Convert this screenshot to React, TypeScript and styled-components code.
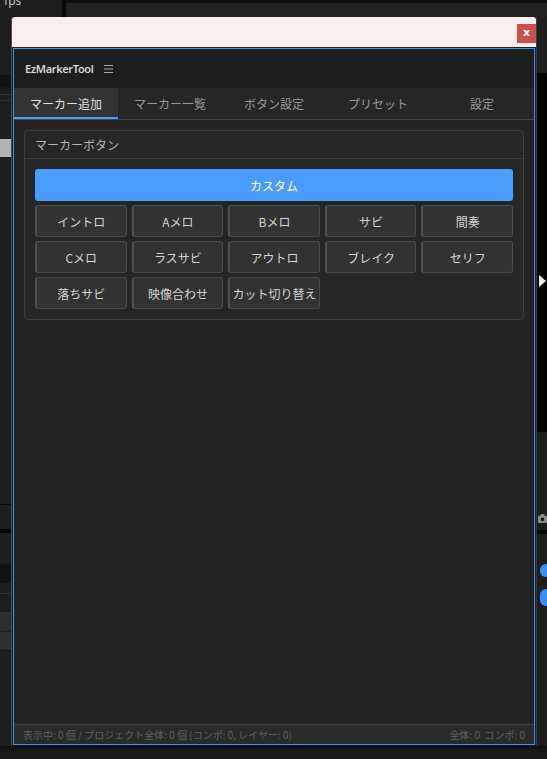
import styled, { createGlobalStyle } from "styled-components";

const GlobalStyle = createGlobalStyle`
  html, body {
    margin: 0;
    padding: 0;
    background: #1c1c1c;
    overflow: hidden;
  }
  * {
    box-sizing: border-box;
  }
`;

const TABS = ["マーカー追加", "マーカー一覧", "ボタン設定", "プリセット", "設定"];

const MARKERS = [
  "イントロ", "Aメロ", "Bメロ", "サビ", "間奏",
  "Cメロ", "ラスサビ", "アウトロ", "ブレイク", "セリフ",
  "落ちサビ", "映像合わせ", "カット切り替え",
];

type BandSpec = [number, string];

// background strips of the host app seen around the floating window
const LEFT_BANDS: BandSpec[] = [
  [58, "#1e1e1e"], [12, "#131313"], [7, "#1b1b1b"], [1, "#333"], [5, "#1e1e1e"],
  [1, "#333"], [38, "#1e1e1e"], [18, "#b2b2b2"], [347, "#1e1e1e"], [1, "#0b0b0b"],
  [24, "#1e1e1e"], [4, "#050505"], [31, "#1e1e1e"], [19, "#121212"], [10, "#1e1e1e"],
  [1, "#333"], [18, "#1e1e1e"], [19, "#2e2e2e"], [1, "#202020"], [17, "#303030"],
  [1, "#202020"], [95, "#1e1e1e"],
];

export default function App() {
  return (
    <>
      <GlobalStyle />
      <Screen>
        <TopStrip>
          <FpsCell>
            <FpsText>fps</FpsText>
          </FpsCell>
          <TopDivider />
          <TopRest />
        </TopStrip>

        <SideStrip>
          {LEFT_BANDS.map(([h, c], i) => (
            <Band key={i} $h={h} $color={c} />
          ))}
        </SideStrip>

        <Window>
          <TitleBar>
            <CloseButton>x</CloseButton>
          </TitleBar>
          <Panel>
            <Header>
              <AppTitle>EzMarkerTool</AppTitle>
              <MenuIcon viewBox="0 0 9 8" width="9" height="8">
                <path d="M0 0.5H9M0 4H9M0 7.5H9" stroke="#a8a8a8" strokeWidth="1" />
              </MenuIcon>
            </Header>

            <TabBar>
              {TABS.map((t, i) => (
                <Tab key={t} $active={i === 0}>
                  {t}
                </Tab>
              ))}
            </TabBar>

            <Content>
              <Group>
                <GroupHeader>マーカーボタン</GroupHeader>
                <GroupBody>
                  <CustomButton>カスタム</CustomButton>
                  <MarkerGrid>
                    {MARKERS.map((m) => (
                      <MarkerButton key={m}>{m}</MarkerButton>
                    ))}
                  </MarkerGrid>
                </GroupBody>
              </Group>
            </Content>

            <StatusBar>
              <span>表示中: 0 個 / プロジェクト全体: 0 個 (コンポ: 0, レイヤー: 0)</span>
              <span>全体: 0&nbsp;&nbsp;コンポ: 0</span>
            </StatusBar>
          </Panel>
        </Window>

        <RightStrip>
          <Band $h={56} $color="#1f1f1f" />
          <BlackArea>
            <PlayArrow />
          </BlackArea>
          <Band $h={76} $color="#1e1e1e" />
          <CameraCell>
            <svg width="11" height="12" viewBox="0 0 11 12">
              <rect x="0" y="2" width="11" height="9" rx="1.5" fill="#8a8a8a" />
              <rect x="3" y="0" width="5" height="3" fill="#8a8a8a" />
              <circle cx="5.5" cy="6.5" r="2.2" fill="#1e1e1e" />
            </svg>
          </CameraCell>
          <Band $h={4} $color="#050505" />
          <Band $h={30} $color="#1e1e1e" />
          <ToggleCell>
            <BluePill $h={13} />
            <Band $h={12} $color="#1e1e1e" />
            <BluePill $h={17} />
          </ToggleCell>
          <Band $h={132} $color="#1e1e1e" />
        </RightStrip>

        <BottomStrip />
      </Screen>
    </>
  );
}

const Screen = styled.div`
  width: 547px;
  height: 759px;
  display: grid;
  grid-template-columns: 12px 525px 10px;
  grid-template-rows: 17px 729px 13px;
  background: #1e1e1e;
  font-family: "Noto Sans CJK JP", "Noto Sans", sans-serif;
`;

const TopStrip = styled.div`
  grid-column: 1 / -1;
  display: flex;
  overflow: hidden;
`;

const FpsCell = styled.div`
  width: 62px;
  background: #1f1f1f;
  overflow: hidden;
`;

const FpsText = styled.div`
  margin: -6px 0 0 4px;
  font-size: 12px;
  line-height: 14px;
  color: #c8c8c8;
  font-family: "Noto Sans", sans-serif;
`;

const TopDivider = styled.div`
  width: 4px;
  background: #0a0a0a;
`;

const TopRest = styled.div`
  flex: 1;
  background: #222;
  border-top: 3px solid #111;
`;

const SideStrip = styled.div`
  display: flex;
  flex-direction: column;
  overflow: hidden;
  border-right: 1px solid #4c4c4c;
`;

const Band = styled.div<{ $h: number; $color: string }>`
  flex: none;
  height: ${(p) => p.$h}px;
  background: ${(p) => p.$color};
`;

const RightStrip = styled.div`
  display: flex;
  flex-direction: column;
  overflow: hidden;
`;

const BlackArea = styled.div`
  height: 359px;
  background: #000;
  padding-top: 202px;
  padding-left: 2px;
`;

const PlayArrow = styled.div`
  width: 0;
  height: 0;
  border-top: 6px solid transparent;
  border-bottom: 6px solid transparent;
  border-left: 7px solid #f2f2f2;
`;

const CameraCell = styled.div`
  height: 22px;
  background: #1e1e1e;
  display: flex;
  align-items: center;
  padding-left: 1px;
`;

const ToggleCell = styled.div`
  display: flex;
  flex-direction: column;
  padding-left: 3px;
  background: #1e1e1e;
`;

const BluePill = styled.div<{ $h: number }>`
  height: ${(p) => p.$h}px;
  background: #3b8ff0;
  border-radius: 6px 0 0 6px;
`;

const BottomStrip = styled.div`
  grid-column: 1 / -1;
  background: #1a1a1a;
  border-top: 1px solid #0e0e0e;
  box-shadow: inset 0 5px 4px -3px #111;
`;

const Window = styled.div`
  display: flex;
  flex-direction: column;
  background: #1e1e1e;
  border-right: 1px solid #3a3a3a;
  border-bottom: 1px solid #111;
`;

const TitleBar = styled.div`
  height: 30px;
  flex: none;
  background: #f9efef;
  border-radius: 3px 3px 0 0;
  display: flex;
  justify-content: flex-end;
  align-items: flex-start;
  padding: 7px 0 0 0;
`;

const CloseButton = styled.div`
  width: 19px;
  height: 19px;
  background: #c85150;
  color: #fff;
  font-family: "DejaVu Sans", sans-serif;
  font-weight: bold;
  font-size: 11px;
  line-height: 17px;
  text-align: center;
`;

const Panel = styled.div`
  flex: 1;
  margin: 1px 1px 0 1px;
  border: 1px solid #3f8fef;
  display: flex;
  flex-direction: column;
  min-height: 0;
`;

const Header = styled.div`
  height: 39px;
  flex: none;
  background: #1e1e1e;
  display: flex;
  align-items: center;
  gap: 10px;
  padding-left: 11px;
`;

const AppTitle = styled.span`
  font-family: "Noto Sans", sans-serif;
  font-size: 11px;
  font-weight: 600;
  letter-spacing: -0.35px;
  color: #d8d8d8;
`;

const MenuIcon = styled.svg`
  display: block;
`;

const TabBar = styled.div`
  height: 32px;
  flex: none;
  display: grid;
  grid-template-columns: repeat(5, 1fr);
  background: #262626;
  border-bottom: 1px solid #444;
`;

const Tab = styled.div<{ $active: boolean }>`
  display: flex;
  align-items: center;
  justify-content: center;
  font-size: 12px;
  color: ${(p) => (p.$active ? "#e0e0e0" : "#999999")};
  background: ${(p) => (p.$active ? "#333333" : "transparent")};
  border-bottom: 2px solid ${(p) => (p.$active ? "#4a9bff" : "transparent")};
  padding-top: 1px;
`;

const Content = styled.div`
  flex: 1;
  background: #232323;
  padding: 10px;
`;

const Group = styled.div`
  border: 1px solid #3c3c3c;
  border-radius: 4px;
  background: #262626;
`;

const GroupHeader = styled.div`
  height: 28px;
  border-bottom: 1px solid #3c3c3c;
  display: flex;
  align-items: center;
  padding-left: 10px;
  font-size: 12px;
  color: #b4b4b4;
`;

const GroupBody = styled.div`
  padding: 10px;
  display: flex;
  flex-direction: column;
  gap: 4px;
`;

const CustomButton = styled.button`
  height: 32px;
  border: none;
  border-radius: 3px;
  background: #4a9cff;
  color: #ffffff;
  font-family: inherit;
  font-size: 12px;
`;

const MarkerGrid = styled.div`
  display: grid;
  grid-template-columns: repeat(5, 1fr);
  gap: 4px 5px;
`;

const MarkerButton = styled.button`
  height: 32px;
  padding: 0;
  background: #323232;
  border: 1px solid #4a4a4a;
  border-left: 2px solid #505050;
  border-radius: 3px;
  color: #d4d4d4;
  font-family: inherit;
  font-size: 12px;
  white-space: nowrap;
`;

const StatusBar = styled.div`
  height: 20px;
  flex: none;
  background: #2a2a2a;
  border-top: 1px solid #3e3e3e;
  display: flex;
  align-items: center;
  justify-content: space-between;
  padding: 0 9px;
  font-size: 10px;
  color: #5e5e5e;
`;
